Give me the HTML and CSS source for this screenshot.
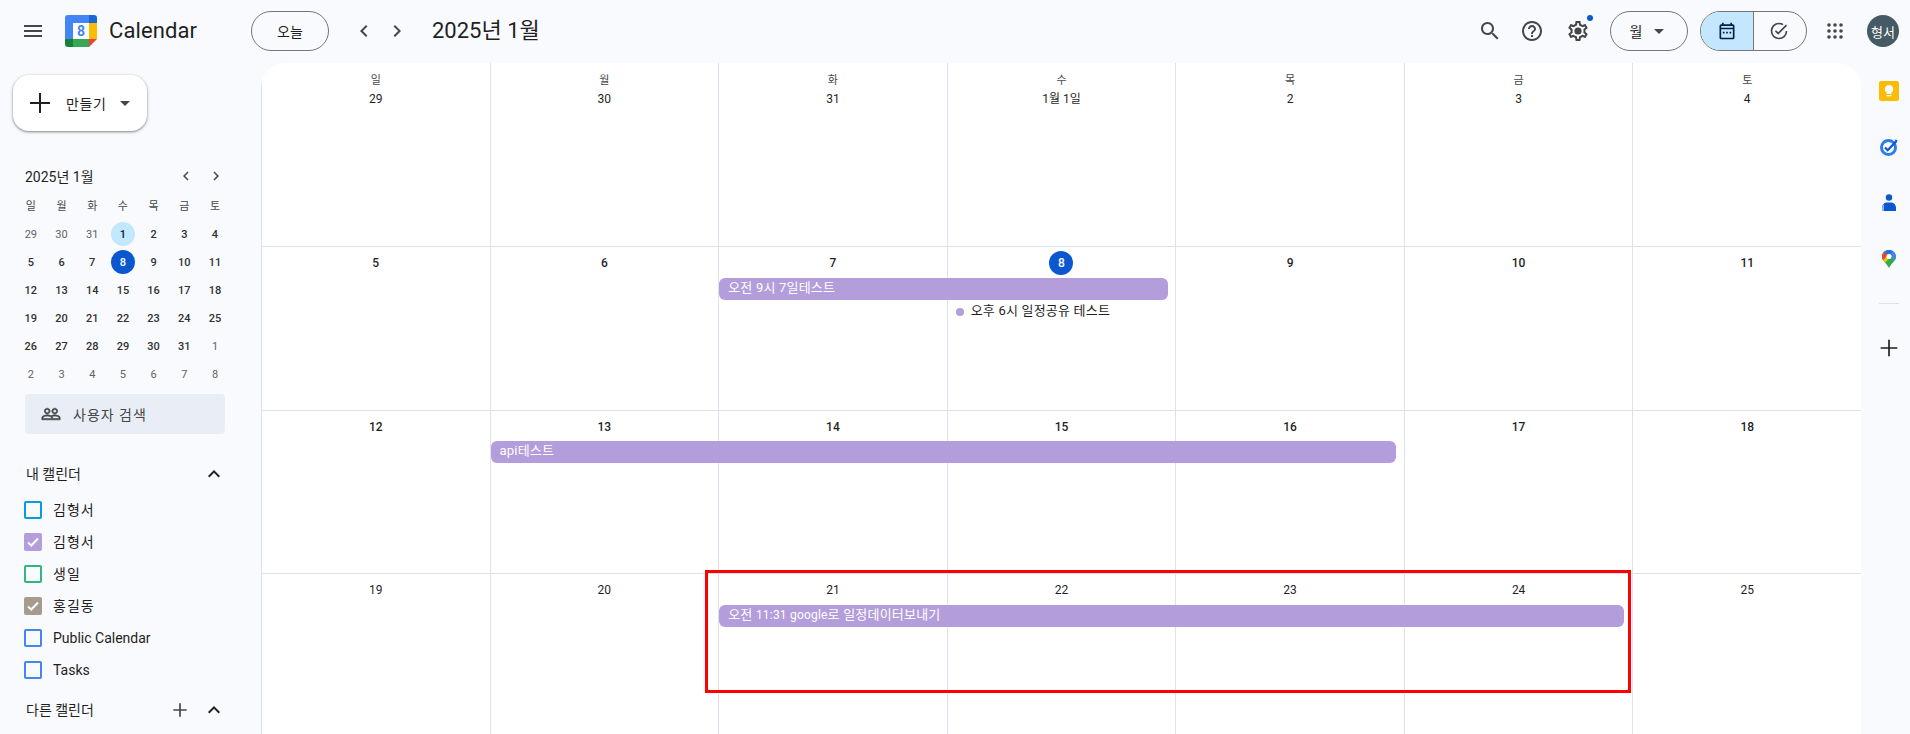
FILE: index.html
```html
<!DOCTYPE html>
<html lang="ko">
<head>
<meta charset="utf-8">
<title>Calendar</title>
<link rel="stylesheet" href="styles.css">
</head>
<body>
<header class="topbar">
  <button class="icon-btn menu-btn" aria-label="menu">
    <svg class="icon" viewBox="0 0 24 24"><path d="M3 18h18v-2H3v2zm0-5h18v-2H3v2zm0-7v2h18V6H3z"/></svg>
  </button>
  <div class="brand">
    <svg class="logo" viewBox="0 0 32 32">
      <path d="M3 0H8V8H8V24H0V3A3 3 0 0 1 3 0Z" fill="#4285f4"/>
      <rect x="8" y="0" width="16" height="8" fill="#4285f4"/>
      <path d="M24 0H29A3 3 0 0 1 32 3V8H24Z" fill="#1967d2"/>
      <rect x="24" y="8" width="8" height="16" fill="#fbbc04"/>
      <rect x="8" y="24" width="16" height="8" fill="#34a853"/>
      <path d="M0 24H8V32H3A3 3 0 0 1 0 29Z" fill="#188038"/>
      <path d="M24 24H32L24 32Z" fill="#ea4335"/>
      <rect x="8" y="8" width="16" height="16" fill="#fff"/>
      <text class="logo-num" x="16" y="21">8</text>
    </svg>
    <span class="brand-name">Calendar</span>
  </div>
  <button class="pill today-btn">오늘</button>
  <div class="nav-btns">
    <button class="icon-btn nav-btn" aria-label="prev"><svg class="icon" viewBox="0 0 24 24"><path d="M15.41 7.41L14 6l-6 6 6 6 1.41-1.41L10.83 12z"/></svg></button>
    <button class="icon-btn nav-btn" aria-label="next"><svg class="icon" viewBox="0 0 24 24"><path d="M8.59 16.59L10 18l6-6-6-6-1.41 1.41L13.17 12z"/></svg></button>
  </div>
  <h1 class="page-title">2025년 1월</h1>
  <div class="spacer"></div>
  <button class="icon-btn tool" aria-label="search"><svg class="icon icon-lg" viewBox="0 0 24 24"><path d="M15.5 14h-.79l-.28-.27C15.41 12.59 16 11.11 16 9.5 16 5.91 13.09 3 9.5 3S3 5.91 3 9.5 5.91 16 9.5 16c1.61 0 3.09-.59 4.23-1.57l.27.28v.79l5 4.99L20.49 19l-4.99-5zm-6 0C7.01 14 5 11.99 5 9.5S7.01 5 9.5 5 14 7.01 14 9.5 11.99 14 9.5 14z"/></svg></button>
  <button class="icon-btn tool tool-help" aria-label="help"><svg class="icon icon-lg" viewBox="0 0 24 24"><path d="M11 18h2v-2h-2v2zm1-16C6.48 2 2 6.48 2 12s4.48 10 10 10 10-4.48 10-10S17.52 2 12 2zm0 18c-4.41 0-8-3.59-8-8s3.59-8 8-8 8 3.59 8 8-3.59 8-8 8zm0-14c-2.21 0-4 1.79-4 4h2c0-1.1.9-2 2-2s2 .9 2 2c0 2-3 1.75-3 5h2c0-2.25 3-2.5 3-5 0-2.21-1.79-4-4-4z"/></svg></button>
  <button class="icon-btn tool tool-gear" aria-label="settings">
    <svg class="icon icon-lg" viewBox="0 0 24 24"><path d="M19.43 12.98c.04-.32.07-.64.07-.98 0-.34-.03-.66-.07-.98l2.11-1.65c.19-.15.24-.42.12-.64l-2-3.46c-.09-.16-.26-.25-.44-.25-.06 0-.12.01-.17.03l-2.49 1c-.52-.4-1.08-.73-1.69-.98l-.38-2.65C14.46 2.18 14.25 2 14 2h-4c-.25 0-.46.18-.49.42l-.38 2.65c-.61.25-1.17.59-1.69.98l-2.49-1c-.06-.02-.12-.03-.18-.03-.17 0-.34.09-.43.25l-2 3.46c-.13.22-.07.49.12.64l2.11 1.65c-.04.32-.07.65-.07.98 0 .33.03.66.07.98l-2.11 1.65c-.19.15-.24.42-.12.64l2 3.46c.09.16.26.25.44.25.06 0 .12-.01.17-.03l2.49-1c.52.4 1.08.73 1.69.98l.38 2.65c.03.24.24.42.49.42h4c.25 0 .46-.18.49-.42l.38-2.65c.61-.25 1.17-.59 1.69-.98l2.49 1c.06.02.12.03.18.03.17 0 .34-.09.43-.25l2-3.46c.12-.22.07-.49-.12-.64l-2.11-1.65zm-1.98-1.71c.04.31.05.52.05.73 0 .21-.02.43-.05.73l-.14 1.13.89.7 1.08.84-.7 1.21-1.27-.51-1.04-.42-.9.68c-.43.32-.84.56-1.25.73l-1.06.43-.16 1.13-.2 1.35h-1.4l-.19-1.35-.16-1.13-1.06-.43c-.43-.18-.83-.41-1.23-.71l-.91-.7-1.06.43-1.27.51-.7-1.21 1.08-.84.89-.7-.14-1.13c-.03-.31-.05-.54-.05-.74s.02-.43.05-.73l.14-1.13-.89-.7-1.08-.84.7-1.21 1.27.51 1.04.42.9-.68c.43-.32.84-.56 1.25-.73l1.06-.43.16-1.13.2-1.35h1.39l.19 1.35.16 1.13 1.06.43c.43.18.83.41 1.23.71l.91.7 1.06-.43 1.27-.51.7 1.21-1.07.85-.89.7.14 1.13z"/><circle cx="12" cy="12" r="3.6"/></svg>
    <span class="gear-dot"></span>
  </button>
  <button class="pill view-btn"><span>월</span><span class="caret"></span></button>
  <div class="segmented">
    <button class="seg seg-on" aria-label="calendar"><svg class="seg-icon" viewBox="0 0 24 24"><path class="navy" d="M19 4h-1V2h-2v2H8V2H6v2H5a2 2 0 0 0-2 2v14a2 2 0 0 0 2 2h14a2 2 0 0 0 2-2V6a2 2 0 0 0-2-2zm0 16H5V10h14v10zM5 8V6h14v2H5zm2 5h2v2H7zm4 0h2v2h-2zm4 0h2v2h-2z"/></svg></button>
    <button class="seg seg-tasks" aria-label="tasks"><svg class="seg-icon" viewBox="0 0 24 24"><path class="grey" d="M12 2a10 10 0 1 0 10 10h-2a8 8 0 1 1-8-8c1.5 0 2.9.4 4.1 1.1l1.4-1.4A9.9 9.9 0 0 0 12 2z"/><path class="grey" d="M20.3 4.3 11 13.6 8.4 11 7 12.4l4 4L21.700 5.700z"/></svg></button>
  </div>
  <button class="icon-btn apps-btn" aria-label="apps">
    <svg class="icon apps" viewBox="0 0 16 16"><circle cx="2" cy="2" r="1.800"/><circle cx="8" cy="2" r="1.800"/><circle cx="14" cy="2" r="1.800"/><circle cx="2" cy="8" r="1.800"/><circle cx="8" cy="8" r="1.800"/><circle cx="14" cy="8" r="1.800"/><circle cx="2" cy="14" r="1.800"/><circle cx="8" cy="14" r="1.800"/><circle cx="14" cy="14" r="1.800"/></svg>
  </button>
  <div class="avatar">형서</div>
</header>

<div class="main">
  <aside class="sidebar">
    <button class="create-btn">
      <svg class="create-plus" viewBox="0 0 24 24"><path d="M22 13h-9v9h-2v-9H2v-2h9V2h2v9h9z"/></svg>
      <span class="create-label">만들기</span>
      <span class="caret create-caret"></span>
    </button>

    <div class="mini-head">
      <span class="mini-title">2025년 1월</span>
      <button class="mini-nav" aria-label="prev"><svg viewBox="0 0 24 24"><path d="M15.41 7.41L14 6l-6 6 6 6 1.41-1.41L10.83 12z"/></svg></button>
      <button class="mini-nav" aria-label="next"><svg viewBox="0 0 24 24"><path d="M8.59 16.59L10 18l6-6-6-6-1.41 1.41L13.17 12z"/></svg></button>
    </div>
    <div class="mini-grid">
      <span class="mini-dow">일</span><span class="mini-dow">월</span><span class="mini-dow">화</span><span class="mini-dow">수</span><span class="mini-dow">목</span><span class="mini-dow">금</span><span class="mini-dow">토</span>
      <span class="mini-day muted">29</span><span class="mini-day muted">30</span><span class="mini-day muted">31</span><span class="mini-day"><b class="num num-soft">1</b></span><span class="mini-day">2</span><span class="mini-day">3</span><span class="mini-day">4</span>
      <span class="mini-day">5</span><span class="mini-day">6</span><span class="mini-day">7</span><span class="mini-day"><b class="num num-today">8</b></span><span class="mini-day">9</span><span class="mini-day">10</span><span class="mini-day">11</span>
      <span class="mini-day">12</span><span class="mini-day">13</span><span class="mini-day">14</span><span class="mini-day">15</span><span class="mini-day">16</span><span class="mini-day">17</span><span class="mini-day">18</span>
      <span class="mini-day">19</span><span class="mini-day">20</span><span class="mini-day">21</span><span class="mini-day">22</span><span class="mini-day">23</span><span class="mini-day">24</span><span class="mini-day">25</span>
      <span class="mini-day">26</span><span class="mini-day">27</span><span class="mini-day">28</span><span class="mini-day">29</span><span class="mini-day">30</span><span class="mini-day">31</span><span class="mini-day muted">1</span>
      <span class="mini-day muted">2</span><span class="mini-day muted">3</span><span class="mini-day muted">4</span><span class="mini-day muted">5</span><span class="mini-day muted">6</span><span class="mini-day muted">7</span><span class="mini-day muted">8</span>
    </div>

    <div class="people-search">
      <svg class="people-icon" viewBox="0 0 24 24"><path d="M16.500 13c-1.200 0-3.070.34-4.500 1-1.430-.67-3.300-1-4.500-1C5.330 13 1 14.080 1 16.250V19h22v-2.750c0-2.170-4.330-3.250-6.500-3.250zm-4 4.500h-10v-1.250c0-.54 2.560-1.750 5-1.750s5 1.210 5 1.750v1.250zm9 0H14v-1.250c0-.46-.2-.86-.52-1.220.88-.3 1.960-.53 3.020-.53 2.440 0 5 1.210 5 1.750v1.250zM7.500 12c1.930 0 3.500-1.570 3.500-3.500S9.430 5 7.500 5 4 6.570 4 8.500 5.570 12 7.500 12zm0-5.500c1.100 0 2 .9 2 2s-.9 2-2 2-2-.9-2-2 .9-2 2-2zm9 5.500c1.930 0 3.500-1.570 3.500-3.500S18.430 5 16.500 5 13 6.570 13 8.500s1.570 3.500 3.500 3.500zm0-5.500c1.100 0 2 .9 2 2s-.9 2-2 2-2-.9-2-2 .9-2 2-2z"/></svg>
      <span>사용자 검색</span>
    </div>

    <div class="section-head section-mine">
      <span class="section-title">내 캘린더</span>
      <svg class="chev-up" viewBox="0 0 24 24"><path d="M7.410 15.410L12 10.830l4.590 4.580L18 14l-6-6-6 6z"/></svg>
    </div>
    <ul class="cal-list">
      <li class="cal-item"><span class="check c-sky"></span><span class="ko">김형서</span></li>
      <li class="cal-item"><span class="check c-lav on"><svg viewBox="0 0 18 18"><path d="M4 9.500l3.300 3L14 5.500" /></svg></span><span class="ko">김형서</span></li>
      <li class="cal-item"><span class="check c-green"></span><span class="ko">생일</span></li>
      <li class="cal-item"><span class="check c-taupe on"><svg viewBox="0 0 18 18"><path d="M4 9.500l3.300 3L14 5.500" /></svg></span><span class="ko">홍길동</span></li>
      <li class="cal-item"><span class="check c-blue"></span>Public Calendar</li>
      <li class="cal-item"><span class="check c-blue"></span>Tasks</li>
    </ul>
    <div class="section-head section-other">
      <span class="section-title">다른 캘린더</span>
      <svg class="plus-small" viewBox="0 0 24 24"><path d="M20 13h-7v7h-2v-7H4v-2h7V4h2v7h7z"/></svg>
      <svg class="chev-up" viewBox="0 0 24 24"><path d="M7.410 15.410L12 10.830l4.590 4.580L18 14l-6-6-6 6z"/></svg>
    </div>
  </aside>

  <main class="calendar">
    <div class="week week-first">
      <div class="cell"><span class="dow">일</span><span class="date date-light">29</span></div>
      <div class="cell"><span class="dow">월</span><span class="date date-light">30</span></div>
      <div class="cell"><span class="dow">화</span><span class="date date-light">31</span></div>
      <div class="cell"><span class="dow">수</span><span class="date date-light">1월 1일</span></div>
      <div class="cell"><span class="dow">목</span><span class="date date-light">2</span></div>
      <div class="cell"><span class="dow">금</span><span class="date date-light">3</span></div>
      <div class="cell"><span class="dow">토</span><span class="date date-light">4</span></div>
    </div>
    <div class="week">
      <div class="cell"><span class="date">5</span></div>
      <div class="cell"><span class="date">6</span></div>
      <div class="cell"><span class="date">7</span></div>
      <div class="cell"><span class="date date-today">8</span></div>
      <div class="cell"><span class="date">9</span></div>
      <div class="cell"><span class="date">10</span></div>
      <div class="cell"><span class="date">11</span></div>
      <div class="event span-3-5">오전 9시 7일테스트</div>
      <div class="dot-event"><span class="dot"></span><span class="dot-text">오후 6시 일정공유 테스트</span></div>
    </div>
    <div class="week">
      <div class="cell"><span class="date">12</span></div>
      <div class="cell"><span class="date">13</span></div>
      <div class="cell"><span class="date">14</span></div>
      <div class="cell"><span class="date">15</span></div>
      <div class="cell"><span class="date">16</span></div>
      <div class="cell"><span class="date">17</span></div>
      <div class="cell"><span class="date">18</span></div>
      <div class="event span-2-6">api테스트</div>
    </div>
    <div class="week">
      <div class="cell"><span class="date date-light">19</span></div>
      <div class="cell"><span class="date date-light">20</span></div>
      <div class="cell"><span class="date date-light">21</span></div>
      <div class="cell"><span class="date date-light">22</span></div>
      <div class="cell"><span class="date date-light">23</span></div>
      <div class="cell"><span class="date date-light">24</span></div>
      <div class="cell"><span class="date date-light">25</span></div>
      <div class="event span-3-7">오전 <span class="lat">11:31 google</span>로 일정데이터보내기</div>
    </div>
    <div class="highlight"></div>
  </main>

  <nav class="rail">
    <div class="rail-item"><svg class="rail-icon" viewBox="0 0 20 20"><rect width="20" height="20" rx="2" fill="#fbbc04"/><path d="M10 4a4.200 4.200 0 0 0-2.400 7.600V13h4.800v-1.400A4.200 4.200 0 0 0 10 4z" fill="#fff"/><rect x="7.600" y="14" width="4.800" height="1.300" fill="#fff"/></svg></div>
    <div class="rail-item"><svg class="rail-icon" viewBox="0 0 20 20"><circle cx="9.500" cy="10.500" r="7" fill="none" stroke="#2b7de9" stroke-width="3"/><path d="M6 10.500l2.700 2.700L17 4.500" fill="none" stroke="#0b57d0" stroke-width="2.200"/><path d="M15.500 2.500l3 .5-1 3z" fill="#0b57d0"/></svg></div>
    <div class="rail-item"><svg class="rail-icon" viewBox="0 0 20 20"><circle cx="10" cy="4.500" r="3.200" fill="#0b57d0"/><path d="M3 18v-3a6 6 0 0 1 4-5.500h6a6 6 0 0 1 4 5.500v3z" fill="#0b57d0"/><path d="M3 18v-3a6 6 0 0 1 2-4v7z" fill="#8ab4f8"/></svg></div>
    <div class="rail-item"><svg class="rail-pin" viewBox="0 0 14 18">
      <path d="M7 0C3 0 0 3 0 6.800 0 11 4.500 13 7 18 9.500 13 14 11 14 6.800 14 3 11 0 7 0Z" fill="#34a853"/>
      <path d="M1.900 2.100A7 7 0 0 0 0 6.800C0 8 .4 9 1 9.900L7 4.500Z" fill="#ea4335"/>
      <path d="M1 9.900C1.600 10.900 2.500 11.700 3.300 12.600L9 6.800 7 4.500Z" fill="#fbbc04"/>
      <path d="M1.900 2.100A7 7 0 0 1 7 0C8.600 0 10 .5 11.200 1.500L7 5Z" fill="#1a73e8"/>
      <path d="M11.200 1.500C13 2.800 14 4.700 14 6.800 14 7.700 13.800 8.500 13.400 9.200L7 6.800Z" fill="#4285f4"/>
      <circle cx="7" cy="6.500" r="2.500" fill="#fff"/>
    </svg></div>
    <div class="rail-divider"></div>
    <div class="rail-add"><svg class="rail-plus" viewBox="0 0 24 24"><path d="M22 13h-9v9h-2v-9H2v-2h9V2h2v9h9z"/></svg></div>
  </nav>
</div>
</body>
</html>
```
FILE: styles.css
```css
* { box-sizing: border-box; }
html, body { margin: 0; height: 100%; overflow: hidden; }
body {
  background: #f8fafd;
  color: #1f1f1f;
  font-family: Roboto, "Noto Sans CJK KR", sans-serif;
  font-size: 14px;
  display: flex;
  flex-direction: column;
}
button { font: inherit; color: inherit; background: none; border: 0; padding: 0; margin: 0; }
ul { list-style: none; margin: 0; padding: 0; }

/* top bar */
.topbar { height: 62px; margin-bottom: 1px; display: flex; align-items: center; padding-left: 9px; padding-right: 11px; flex: none; }
.icon-btn { display: flex; align-items: center; justify-content: center; position: relative; flex: none; }
.icon { width: 24px; height: 24px; fill: #444746; display: block; }
.menu-btn { width: 48px; height: 48px; }
.brand { width: 186px; margin-left: 8px; display: flex; align-items: center; gap: 12px; flex: none; }
.logo { width: 32px; height: 32px; display: block; flex: none; }
.logo-num { font-family: Roboto, sans-serif; font-size: 14px; font-weight: 700; fill: #4285f4; text-anchor: middle; }
.brand-name { font-size: 22px; color: #1f1f1f; line-height: 28px; letter-spacing: .1px; }
.pill { height: 40px; border: 1px solid #747775; border-radius: 20px; display: flex; align-items: center; justify-content: center; font-size: 14px; font-weight: 400; flex: none; }
.today-btn { width: 78px; }
.nav-btns { display: flex; margin-left: 18px; }
.nav-btn { width: 33px; height: 40px; }
.page-title { margin: 0 0 0 19px; font-size: 22px; font-weight: 400; line-height: 28px; }
.spacer { flex: 1; }
.tool { width: 40px; height: 40px; }
.tool-help { margin-left: 2px; }
.tool-gear { margin-left: 6px; }
.icon-lg { width: 24px; height: 24px; }
.gear-dot { position: absolute; top: 4px; right: 5px; width: 6px; height: 6px; background: #0b57d0; border-radius: 50%; }
.view-btn { width: 78px; margin-left: 12px; gap: 12px; padding-right: 4px; }
.caret { width: 0; height: 0; border-left: 5px solid transparent; border-right: 5px solid transparent; border-top: 5px solid #444746; display: block; }
.segmented { margin-left: 12px; width: 107px; height: 40px; border: 1px solid #747775; border-radius: 20px; display: flex; overflow: hidden; flex: none; }
.seg { width: 52px; display: flex; align-items: center; justify-content: center; flex: none; }
.seg + .seg { flex: 1; border-left: 1px solid #747775; }
.seg-tasks { padding-right: 2px; }
.seg-on { background: #c2e7ff; }
.seg-icon { width: 20px; height: 20px; display: block; }
.navy { fill: #041e49; }
.grey { fill: #444746; }
.apps-btn { width: 40px; height: 40px; margin-left: 8px; }
.apps { width: 16px; height: 16px; }
.avatar { width: 32px; height: 32px; margin-left: 12px; border-radius: 50%; background: #455a64; color: #fff; font-size: 13px; display: flex; align-items: center; justify-content: center; flex: none; white-space: nowrap; }

/* layout */
.main { flex: 1; display: flex; min-height: 0; }
.sidebar { width: 261px; flex: none; }
.calendar { flex: 1; min-width: 0; background: #fff; border-radius: 24px 24px 0 0; position: relative; overflow: hidden; }
.rail { width: 49px; flex: none; padding-left: 7px; display: flex; flex-direction: column; align-items: center; }

/* sidebar */
.create-btn { width: 134px; height: 56px; margin: 12px 0 0 13px; background: #fff; border-radius: 16px; box-shadow: 0 1px 2px rgba(0,0,0,.3), 0 1px 3px 1px rgba(0,0,0,.15); display: flex; align-items: center; padding-left: 15px; }
.create-plus { width: 24px; height: 24px; fill: #1f1f1f; flex: none; }
.create-label { margin-left: 14px; font-size: 14px; font-weight: 400; letter-spacing: .6px; }
.create-caret { margin-left: 14px; }
.mini-head { display: flex; align-items: center; height: 28px; margin: 31px 0 2px 25px; }
.mini-title { font-size: 14px; font-weight: 400; width: 146px; }
.mini-nav { width: 30px; height: 28px; display: flex; align-items: center; justify-content: center; }
.mini-nav svg { width: 18px; height: 18px; fill: #444746; display: block; }
.mini-grid { display: grid; grid-template-columns: repeat(7, 30.7px); grid-auto-rows: 28px; margin-left: 15.5px; }
.mini-dow, .mini-day { display: flex; align-items: center; justify-content: center; font-size: 11px; line-height: 1; }
.mini-dow { color: #444746; font-weight: 400; }
.mini-day { font-weight: 500; color: #303134; }
.mini-day.muted { color: #5f6368; font-weight: 400; }
.num { width: 24px; height: 24px; border-radius: 50%; display: flex; align-items: center; justify-content: center; font-weight: 500; }
.num-soft { background: #c2e7ff; color: #001d35; }
.num-today { background: #0b57d0; color: #fff; }
.people-search { width: 200px; height: 40px; margin: 6px 0 0 25px; background: #e9eef6; border-radius: 4px; display: flex; align-items: center; padding-left: 16px; gap: 12px; color: #444746; font-size: 14px; letter-spacing: 1px; }
.people-icon { width: 20px; height: 20px; fill: #444746; stroke: #444746; stroke-width: .7; flex: none; }
.section-head { height: 32px; display: flex; align-items: center; margin-left: 26px; font-size: 14px; font-weight: 400; }
.section-mine { margin-top: 24px; }
.section-other { margin-top: 8px; }
.section-title { flex: 1; margin-bottom: 2px; }
.chev-up { width: 24px; height: 24px; fill: #1f1f1f; margin-right: 35px; flex: none; }
.plus-small { width: 20px; height: 20px; fill: #444746; margin-right: 12px; flex: none; }
.cal-list { margin-top: 4px; }
.cal-item { height: 32px; display: flex; align-items: center; padding-left: 24px; font-size: 14px; gap: 11px; color: #1f1f1f; }
.ko { letter-spacing: 1px; margin-bottom: 2px; }
.check { width: 18px; height: 18px; border: 2px solid; border-radius: 2px; flex: none; display: block; }
.check svg { width: 18px; height: 18px; margin: -2px; display: block; fill: none; stroke: #fff; stroke-width: 2; }
.check.on { background: currentColor; }
.c-sky { color: #039be5; }
.c-lav { color: #b39ddb; }
.c-green { color: #33b679; }
.c-taupe { color: #a79b8e; }
.c-blue { color: #4285f4; }

/* month grid */
.week { height: 163.5px; display: grid; grid-template-columns: repeat(7, minmax(0, 1fr)); grid-template-rows: 30.5px 23.5px 24px 1fr; border-top: 1px solid #dde3ea; }
.week-first { height: 183.3px; border-top: 0; }
.cell { grid-row: 1 / -1; border-left: 1px solid #dde3ea; display: flex; flex-direction: column; align-items: center; padding-top: 4px; }
.cell:nth-child(1) { grid-column: 1; }
.cell:nth-child(2) { grid-column: 2; }
.cell:nth-child(3) { grid-column: 3; }
.cell:nth-child(4) { grid-column: 4; }
.cell:nth-child(5) { grid-column: 5; }
.cell:nth-child(6) { grid-column: 6; }
.cell:nth-child(7) { grid-column: 7; }
.week-first .cell { padding-top: 9px; }
.dow { height: 15px; line-height: 17px; font-size: 11px; font-weight: 400; color: #444746; }
.date { height: 24px; min-width: 24px; line-height: 24px; text-align: center; font-size: 12px; font-weight: 500; color: #1f1f1f; }
.date-light { font-weight: 400; }
.date-today { background: #0b57d0; color: #fff; border-radius: 50%; }
.event { grid-row: 2; height: 22px; line-height: 20px; background: #b39ddb; color: #fff; border-radius: 6px; padding-left: 9px; font-size: 13px; letter-spacing: .2px; font-weight: 400; margin: 0 8px 0 1px; white-space: nowrap; overflow: hidden; }
.lat { font-size: 12px; }
.span-3-5 { grid-column: 3 / 5; margin-right: 7px; }
.span-2-6 { grid-column: 2 / 6; }
.span-3-7 { grid-column: 3 / 7; }
.dot-event { grid-row: 3; grid-column: 4; height: 22px; display: flex; align-items: center; font-size: 13px; letter-spacing: .2px; font-weight: 400; padding-left: 9px; gap: 7px; white-space: nowrap; line-height: 20px; }
.dot-text { margin-bottom: 2px; }
.dot { width: 8px; height: 8px; border-radius: 50%; background: #b39ddb; flex: none; }
.highlight { position: absolute; left: 444px; top: 507px; width: 926px; height: 123px; border: 3px solid #ff0000; pointer-events: none; }

/* right rail */
.rail-item { height: 56px; display: flex; align-items: center; justify-content: center; }
.rail-icon { width: 20px; height: 20px; display: block; }
.rail-pin { width: 14px; height: 18px; display: block; }
.rail-divider { width: 20px; height: 1px; background: #dde3ea; margin-top: 16px; }
.rail-add { height: 40px; margin-top: 24px; display: flex; align-items: center; }
.rail-plus { width: 20px; height: 20px; fill: #1f1f1f; display: block; }
```
